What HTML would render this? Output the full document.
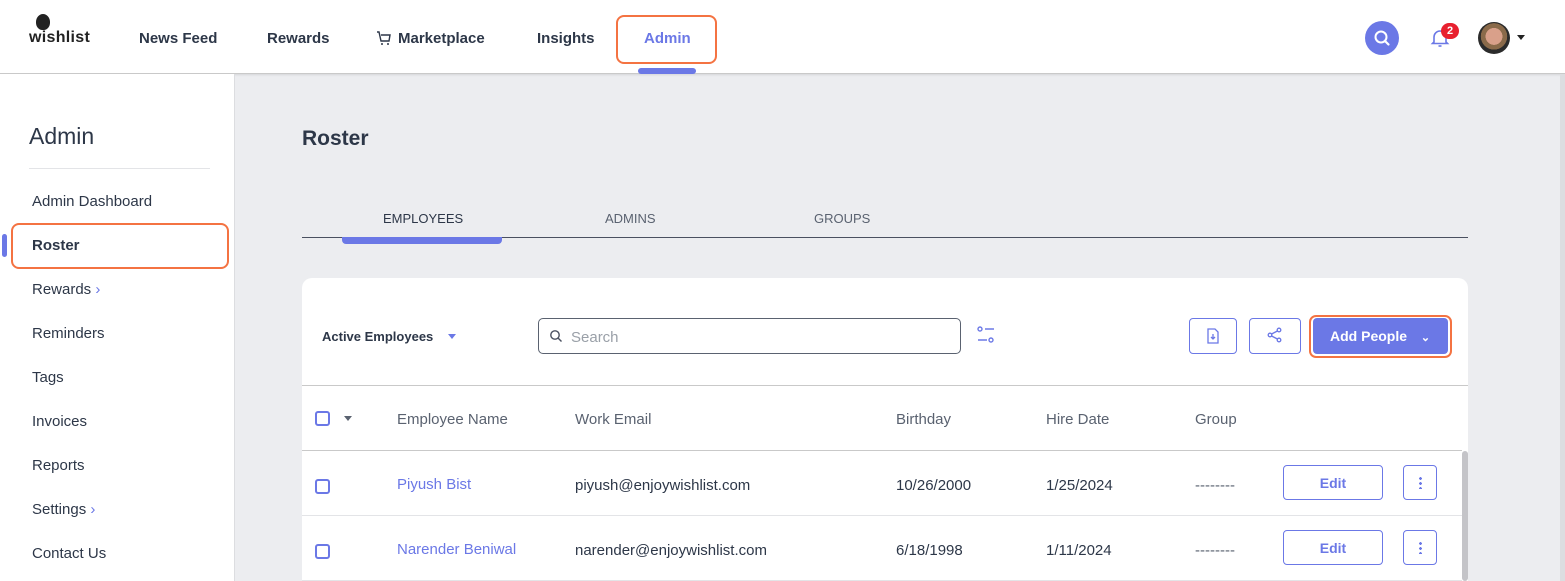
<!DOCTYPE html>
<html><head><meta charset="utf-8"><style>
*{box-sizing:border-box;margin:0;padding:0}
html,body{width:1565px;height:581px;overflow:hidden}
body{background:#ecedf0;font-family:"Liberation Sans",sans-serif;color:#2d3748;position:relative}
.abs{position:absolute}
.hdr{left:0;top:0;width:1565px;height:74px;background:#fff;border-bottom:1px solid #c9c9c9;box-shadow:0 1px 2px rgba(0,0,0,.1)}
.nav{top:30px;font-size:15px;font-weight:bold;color:#2d3748}
.side{left:0;top:74px;width:235px;height:507px;background:#fff;border-right:1px solid #dcdde0}
.si{left:32px;font-size:15px;color:#2d3748}
.card{left:302px;top:278px;width:1166px;height:303px;background:#fff;border-radius:10px 10px 0 0}
.th{top:411px;font-size:15px;color:#5a6270}
.td{font-size:15px;color:#2d3748}
.btn{border:1px solid #6b78e6;border-radius:4px;background:#fff}
.cb{width:15px;height:15px;border:2px solid #6b78e6;border-radius:3px}
.edit{width:100px;height:35px;color:#6b78e6;font-weight:bold;font-size:14px;text-align:center;line-height:35px}
.dots{width:34px;height:35px}
</style></head><body>
<div class="abs hdr"></div>
<div class="abs" style="left:36px;top:14px;width:14px;height:16px;border-radius:50% 50% 45% 45%;background:#222"></div>
<div class="abs" style="left:29px;top:29px;font-size:16px;font-weight:bold;color:#222;letter-spacing:.3px">wishlist</div>
<div class="abs nav" style="left:139px">News Feed</div>
<div class="abs nav" style="left:267px">Rewards</div>
<svg class="abs" style="left:376px;top:31px" width="16" height="15" viewBox="0 0 16 15"><path d="M1 1h2l2 9h8l1-6H5" fill="none" stroke="#2d3748" stroke-width="1.4"/><circle cx="6" cy="13" r="1" fill="#2d3748"/><circle cx="12" cy="13" r="1" fill="#2d3748"/></svg>
<div class="abs nav" style="left:398px">Marketplace</div>
<div class="abs nav" style="left:537px">Insights</div>
<div class="abs" style="left:616px;top:15px;width:101px;height:49px;border:2.5px solid #f47342;border-radius:8px"></div>
<div class="abs nav" style="left:644px;color:#6b78e6">Admin</div>
<div class="abs" style="left:638px;top:68px;width:58px;height:6px;background:#6b78e6;border-radius:3px"></div>
<div class="abs" style="left:1365px;top:21px;width:34px;height:34px;border-radius:50%;background:#6b78e6"></div>
<svg class="abs" style="left:1372px;top:28px" width="20" height="20" viewBox="0 0 20 20"><circle cx="9" cy="9" r="5.5" fill="none" stroke="#fff" stroke-width="2"/><path d="M13 13l3.5 3.5" stroke="#fff" stroke-width="2.2" stroke-linecap="round"/></svg>
<svg class="abs" style="left:1430px;top:27px" width="20" height="22" viewBox="0 0 20 22"><path d="M4 15V10a6 6 0 0112 0v5l1.5 1.5h-15z" fill="none" stroke="#6b78e6" stroke-width="1.6"/><path d="M8.5 19h3" stroke="#6b78e6" stroke-width="1.6"/></svg>
<div class="abs" style="left:1441px;top:23px;width:18px;height:16px;border-radius:8px;background:#e8202f;color:#fff;font-size:11px;font-weight:bold;text-align:center;line-height:16px">2</div>
<div class="abs" style="left:1478px;top:22px;width:32px;height:32px;border-radius:50%;background:radial-gradient(circle at 50% 45%,#d9a08a 0 35%,#8a6a4a 36% 55%,#2b2b2b 56%)"></div>
<div class="abs" style="left:1517px;top:35px;border:4px solid transparent;border-top:5px solid #222"></div>

<div class="abs side"></div>
<div class="abs" style="left:29px;top:123px;font-size:23px;color:#2d3748">Admin</div>
<div class="abs" style="left:29px;top:168px;width:181px;height:1px;background:#e3e4e7"></div>
<div class="abs si" style="top:193px">Admin Dashboard</div>
<div class="abs" style="left:2px;top:234px;width:5px;height:23px;border-radius:3px;background:#6b78e6"></div>
<div class="abs" style="left:11px;top:223px;width:218px;height:46px;border:2.5px solid #f47342;border-radius:8px"></div>
<div class="abs si" style="top:237px;font-weight:bold">Roster</div>
<div class="abs si" style="top:281px">Rewards <span style="color:#6b78e6">›</span></div>
<div class="abs si" style="top:325px">Reminders</div>
<div class="abs si" style="top:369px">Tags</div>
<div class="abs si" style="top:413px">Invoices</div>
<div class="abs si" style="top:457px">Reports</div>
<div class="abs si" style="top:501px">Settings <span style="color:#6b78e6">›</span></div>
<div class="abs si" style="top:545px">Contact Us</div>

<div class="abs" style="left:302px;top:127px;font-size:21px;font-weight:bold;color:#2d3748">Roster</div>
<div class="abs" style="left:383px;top:211px;font-size:13px;color:#2d3748">EMPLOYEES</div>
<div class="abs" style="left:605px;top:211px;font-size:13px;color:#5a6270">ADMINS</div>
<div class="abs" style="left:814px;top:211px;font-size:13px;color:#5a6270">GROUPS</div>
<div class="abs" style="left:302px;top:237px;width:1166px;height:1px;background:#4a5060"></div>
<div class="abs" style="left:342px;top:237px;width:160px;height:7px;background:#6b78e6;border-radius:0 0 4px 4px"></div>

<div class="abs card"></div>
<div class="abs" style="left:322px;top:329px;font-size:13px;font-weight:bold;color:#2d3748">Active Employees</div>
<div class="abs" style="left:448px;top:334px;border:4px solid transparent;border-top:5px solid #6b78e6"></div>
<div class="abs" style="left:538px;top:318px;width:423px;height:36px;border:1px solid #5a6270;border-radius:5px"></div>
<svg class="abs" style="left:549px;top:329px" width="14" height="14" viewBox="0 0 14 14"><circle cx="6" cy="6" r="4.2" fill="none" stroke="#4a5060" stroke-width="1.4"/><path d="M9 9l3.5 3.5" stroke="#4a5060" stroke-width="1.4"/></svg>
<div class="abs" style="left:571px;top:329px;font-size:15px;color:#9aa0a8">Search</div>
<svg class="abs" style="left:976px;top:325px" width="20" height="20" viewBox="0 0 20 20" fill="none" stroke="#6b78e6" stroke-width="1.4"><circle cx="4" cy="4" r="2"/><path d="M9 4h9M2 15h9"/><circle cx="15" cy="15" r="2"/></svg>
<div class="abs btn" style="left:1189px;top:318px;width:48px;height:36px"></div>
<svg class="abs" style="left:1206px;top:328px" width="14" height="16" viewBox="0 0 14 16" fill="none" stroke="#6b78e6" stroke-width="1.3"><path d="M2 1h7l3 3v11H2z"/><path d="M7 6v5M5 9l2 2 2-2"/></svg>
<div class="abs btn" style="left:1249px;top:318px;width:52px;height:36px"></div>
<svg class="abs" style="left:1267px;top:327px" width="16" height="16" viewBox="0 0 16 16" fill="none" stroke="#6b78e6" stroke-width="1.3"><circle cx="12" cy="3" r="1.8"/><circle cx="3" cy="8" r="1.8"/><circle cx="12" cy="13" r="1.8"/><path d="M4.6 7l5.8-3M4.6 9l5.8 3"/></svg>
<div class="abs" style="left:1309px;top:315px;width:143px;height:43px;border:2.5px solid #f47342;border-radius:7px"></div>
<div class="abs" style="left:1313px;top:318px;width:135px;height:36px;background:#6b78e6;border-radius:4px;color:#fff;font-weight:bold;font-size:14px;line-height:37px;padding-left:17px">Add People <span style="font-size:11px;margin-left:10px">⌄</span></div>

<div class="abs" style="left:302px;top:385px;width:1166px;height:1px;background:#c9c9c9"></div>
<div class="abs cb" style="left:315px;top:411px"></div>
<div class="abs" style="left:344px;top:416px;border:4px solid transparent;border-top:5px solid #5a6270"></div>
<div class="abs th" style="left:397px">Employee Name</div>
<div class="abs th" style="left:575px">Work Email</div>
<div class="abs th" style="left:896px">Birthday</div>
<div class="abs th" style="left:1046px">Hire Date</div>
<div class="abs th" style="left:1195px">Group</div>
<div class="abs" style="left:302px;top:450px;width:1160px;height:1px;background:#c9c9c9"></div>
<div class="abs" style="left:1462px;top:451px;width:6px;height:130px;background:#c4c4c8;border-radius:3px"></div>

<div class="abs cb" style="left:315px;top:479px"></div>
<div class="abs td" style="left:397px;top:476px;color:#6b78e6">Piyush Bist</div>
<div class="abs td" style="left:575px;top:477px">piyush@enjoywishlist.com</div>
<div class="abs td" style="left:896px;top:477px">10/26/2000</div>
<div class="abs td" style="left:1046px;top:477px">1/25/2024</div>
<div class="abs td" style="left:1195px;top:477px;color:#5a6270">--------</div>
<div class="abs btn edit" style="left:1283px;top:465px">Edit</div>
<div class="abs btn dots" style="left:1403px;top:465px"></div>
<div class="abs" style="left:1419px;top:476px;width:3px;height:13px;background:radial-gradient(circle,#6b78e6 1.3px,transparent 1.5px) 0 0/3px 5px"></div>
<div class="abs" style="left:302px;top:515px;width:1160px;height:1px;background:#e3e4e7"></div>

<div class="abs cb" style="left:315px;top:544px"></div>
<div class="abs td" style="left:397px;top:541px;color:#6b78e6">Narender Beniwal</div>
<div class="abs td" style="left:575px;top:542px">narender@enjoywishlist.com</div>
<div class="abs td" style="left:896px;top:542px">6/18/1998</div>
<div class="abs td" style="left:1046px;top:542px">1/11/2024</div>
<div class="abs td" style="left:1195px;top:542px;color:#5a6270">--------</div>
<div class="abs btn edit" style="left:1283px;top:530px">Edit</div>
<div class="abs btn dots" style="left:1403px;top:530px"></div>
<div class="abs" style="left:1419px;top:541px;width:3px;height:13px;background:radial-gradient(circle,#6b78e6 1.3px,transparent 1.5px) 0 0/3px 5px"></div>
<div class="abs" style="left:302px;top:580px;width:1160px;height:1px;background:#e3e4e7"></div>
<div class="abs" style="left:1560px;top:74px;width:5px;height:507px;background:#dcdde0"></div>
</body></html>
